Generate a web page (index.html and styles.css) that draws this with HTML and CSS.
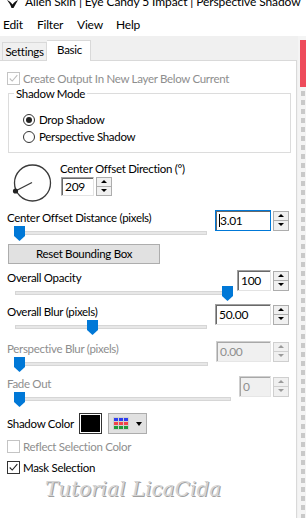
FILE: index.html
```html
<!DOCTYPE html>
<html>
<head>
<meta charset="utf-8">
<link rel="stylesheet" href="styles.css">
</head>
<body>
<div class="titlebar">
  <svg class="app-icon" width="11" height="8" viewBox="0 0 11 8"><path d="M0 0 C2 0.5 4 2.5 5.5 4.5 C7 2.5 9 0.5 11 0 C9.5 2.5 8 5.5 6.5 8 L4.5 8 C3.5 5 2 2.5 0 0 Z" fill="#111"/></svg>
  <span class="title">Allen Skin | Eye Candy 5 Impact | Perspective Shadow</span>
</div>
<div class="menubar">
  <span class="menu-item mi-edit">Edit</span>
  <span class="menu-item mi-filter">Filter</span>
  <span class="menu-item mi-view">View</span>
  <span class="menu-item">Help</span>
</div>
<div class="workspace">
  <div class="main">
    <div class="tabs">
      <div class="tab">Settings</div>
      <div class="tab tab-active">Basic</div>
    </div>
    <div class="panel">
      <div class="check disabled">
        <span class="box"><svg viewBox="0 0 13 13" width="11" height="11"><path d="M2 6.5 L5 9.5 L11 2.5" fill="none" stroke="#bdbdbd" stroke-width="1.3"/></svg></span>
        <span>Create Output In New Layer Below Current</span>
      </div>

      <fieldset class="group">
        <legend>Shadow Mode</legend>
        <div class="radio"><span class="dot dot-on"></span><span>Drop Shadow</span></div>
        <div class="radio"><span class="dot"></span><span>Perspective Shadow</span></div>
      </fieldset>

      <div class="dial-row">
        <svg class="dial" width="40" height="40" viewBox="0 0 40 40">
          <circle cx="20.5" cy="20" r="18" fill="none" stroke="#3a3a3a" stroke-width="1.3"/>
          <line x1="3.5" y1="28" x2="20" y2="19.5" stroke="#3a3a3a" stroke-width="1.4"/>
          <circle cx="3.5" cy="28" r="2.6" fill="#222"/>
        </svg>
        <div class="dial-ctrl">
          <div class="label">Center Offset Direction (°)</div>
          <div class="spin spin-dial">
            <div class="field w33">209</div>
            <div class="arrows"><span class="arr up"></span><span class="arr down"></span></div>
          </div>
        </div>
      </div>

      <div class="sblock mt7">
        <div class="sleft">
          <div class="label">Center Offset Distance (pixels)</div>
          <div class="slider"><div class="track"></div><svg class="thumb" style="left:-1px" width="11" height="15" viewBox="0 0 11 15"><polygon points="0,0 11,0 11,10 5.5,15 0,10" fill="#0078d7"/></svg></div>
        </div>
        <div class="spin">
          <div class="field w56 focused"><span class="caret"></span>3.01</div>
          <div class="arrows"><span class="arr up"></span><span class="arr down"></span></div>
        </div>
      </div>

      <div class="btn">Reset Bounding Box</div>

      <div class="sblock mt6">
        <div class="sleft">
          <div class="label">Overall Opacity</div>
          <div class="slider"><div class="track"></div><svg class="thumb" style="left:207px" width="11" height="15" viewBox="0 0 11 15"><polygon points="0,0 11,0 11,10 5.5,15 0,10" fill="#0078d7"/></svg></div>
        </div>
        <div class="spin">
          <div class="field w34">100</div>
          <div class="arrows"><span class="arr up"></span><span class="arr down"></span></div>
        </div>
      </div>

      <div class="sblock mt3">
        <div class="sleft">
          <div class="label">Overall Blur (pixels)</div>
          <div class="slider"><div class="track"></div><svg class="thumb" style="left:72px" width="11" height="15" viewBox="0 0 11 15"><polygon points="0,0 11,0 11,10 5.5,15 0,10" fill="#0078d7"/></svg></div>
        </div>
        <div class="spin">
          <div class="field w56">50.00</div>
          <div class="arrows"><span class="arr up"></span><span class="arr down"></span></div>
        </div>
      </div>

      <div class="sblock mt6 disabled">
        <div class="sleft">
          <div class="label">Perspective Blur (pixels)</div>
          <div class="slider"><div class="track"></div><svg class="thumb" style="left:-1px" width="11" height="15" viewBox="0 0 11 15"><polygon points="0,0 11,0 11,10 5.5,15 0,10" fill="#0078d7"/></svg></div>
        </div>
        <div class="spin">
          <div class="field w55 off">0.00</div>
          <div class="arrows"><span class="arr up"></span><span class="arr down"></span></div>
        </div>
      </div>

      <div class="sblock mt4 disabled">
        <div class="sleft">
          <div class="label">Fade Out</div>
          <div class="slider"><div class="track"></div><svg class="thumb" style="left:-1px" width="11" height="15" viewBox="0 0 11 15"><polygon points="0,0 11,0 11,10 5.5,15 0,10" fill="#0078d7"/></svg></div>
        </div>
        <div class="spin">
          <div class="field w32 off">0</div>
          <div class="arrows"><span class="arr up"></span><span class="arr down"></span></div>
        </div>
      </div>

      <div class="color-row">
        <span class="color-label">Shadow Color</span>
        <span class="swatch"></span>
        <span class="palette-btn">
          <span class="grid">
            <i class="b"></i><i class="b"></i><i class="b"></i>
            <i class="r"></i><i class="r"></i><i class="r"></i>
            <i class="g"></i><i class="g"></i><i class="g"></i>
          </span>
          <span class="caret-down"></span>
        </span>
      </div>

      <div class="check disabled mt5">
        <span class="box"></span>
        <span>Reflect Selection Color</span>
      </div>
      <div class="check mt6">
        <span class="box"><svg viewBox="0 0 13 13" width="11" height="11"><path d="M2 6.5 L5 9.5 L11 2.5" fill="none" stroke="#222" stroke-width="1.3"/></svg></span>
        <span>Mask Selection</span>
      </div>

      <div class="watermark">Tutorial LicaCida</div>
    </div>
  </div>
  <div class="side">
    <div class="red"></div>
    <div class="dashes"></div>
  </div>
</div>
</body>
</html>
```
FILE: styles.css
```css
* { box-sizing: border-box; }
html, body { margin: 0; padding: 0; }
body {
  width: 306px;
  height: 518px;
  overflow: hidden;
  background: #fff;
  font-family: Lato, "Liberation Sans", sans-serif;
  font-size: 11.5px;
  letter-spacing: -0.3px;
  color: #000;
}

.titlebar {
  height: 12px;
  overflow: hidden;
  display: flex;
  align-items: flex-start;
  white-space: nowrap;
}
.app-icon { margin: 0 0 0 7px; flex: none; }
.title {
  margin: -6px 0 0 7px;
  line-height: 16px;
  font-size: 12px;
  letter-spacing: -0.1px;
}

.menubar {
  height: 24px;
  display: flex;
  align-items: center;
  padding-left: 3px;
  font-size: 12px;
  letter-spacing: -0.2px;
}
.menu-item { display: block; }
.mi-edit { width: 34px; }
.mi-filter { width: 40px; }
.mi-view { width: 39px; }

.workspace { display: flex; height: 482px; }
.main { width: 298px; background: #f0f0f0; display: flex; flex-direction: column; }

.tabs {
  height: 24px;
  display: flex;
  align-items: flex-end;
  padding-left: 2px;
  position: relative;
  z-index: 1;
}
.tab {
  width: 45px;
  height: 18px;
  border: 1px solid #d9d9d9;
  border-bottom: none;
  background: #f0f0f0;
  text-align: center;
  line-height: 17px;
}
.tab-active {
  width: 44px;
  height: 21px;
  margin-bottom: -1px;
  background: #fff;
  border-left: none;
  line-height: 18px;
  padding-left: 2px;
}

.panel {
  width: 297px;
  flex: 1;
  background: #fff;
  border-top: 1px solid #d9d9d9;
  border-right: 1px solid #d9d9d9;
  overflow: hidden;
}

.label { line-height: 15px; white-space: nowrap; }
.disabled, .disabled .label { color: #8e8e8e; }

.check {
  display: flex;
  align-items: center;
  height: 15px;
  margin: 10px 0 0 7px;
  gap: 3px;
  line-height: 15px;
}
.box {
  width: 13px;
  height: 13px;
  border: 1px solid #333;
  background: #fff;
  display: flex;
  align-items: center;
  justify-content: center;
  flex: none;
}
.check.disabled .box { border-color: #c4c4c4; }
.mt5 { margin-top: 5px; }
.mt6 { margin-top: 6px; }
.mt3 { margin-top: 3px; }
.mt4 { margin-top: 4px; }
.mt7 { margin-top: 7px; }

.group {
  margin: 0 5px 0 8px;
  padding: 10px 0 7px 14px;
  border: 1px solid #dcdcdc;
  min-width: 0;
}
.group legend {
  margin-left: -9px;
  padding: 0 2px;
  line-height: 15px;
}
.radio {
  display: flex;
  align-items: center;
  height: 17px;
  gap: 4px;
}
.dot {
  width: 12px;
  height: 12px;
  border: 1px solid #333;
  border-radius: 50%;
  display: flex;
  align-items: center;
  justify-content: center;
  flex: none;
}
.dot-on::after {
  content: "";
  width: 6px;
  height: 6px;
  border-radius: 50%;
  background: #222;
}

.dial-row {
  display: flex;
  align-items: flex-start;
  margin-top: 8px;
  padding-left: 12px;
}
.dial { margin-top: 2px; flex: none; }
.dial-ctrl { margin-left: 8px; }
.spin-dial { margin: 1px 0 0 1px; }
.spin-dial .field { height: 19px; line-height: 17px; }
.spin-dial .arrows { margin-top: 0; height: 19px; }
.spin-dial .arr { height: 9.5px; }

.sblock {
  display: flex;
  align-items: flex-start;
  padding: 0 7px;
  gap: 8px;
}
.sleft { flex: 1; min-width: 0; }
.slider {
  position: relative;
  height: 16px;
  margin-left: 8px;
}
.track {
  position: absolute;
  left: 0;
  right: 0;
  top: 6px;
  height: 4px;
  background: #e7e7e7;
  border: 1px solid #d6d6d6;
}
.thumb { position: absolute; top: 1px; }

.spin { display: flex; gap: 2px; align-items: flex-start; flex: none; }
.field {
  height: 21px;
  border: 1px solid;
  border-color: #a0a0a0 #e3e3e3 #e3e3e3 #a0a0a0;
  box-shadow: inset 1px 1px 0 #696969;
  background: #fff;
  padding-left: 3px;
  line-height: 19px;
  color: #000;
  font-size: 12px;
  position: relative;
}
.w32 { width: 32px; }
.w33 { width: 33px; }
.w34 { width: 34px; }
.w55 { width: 55px; }
.w56 { width: 56px; }
.focused {
  border-color: #0078d7;
}
.caret {
  display: inline-block;
  width: 1px;
  height: 13px;
  background: #000;
  vertical-align: -2px;
}
.off {
  background: #f0f0f0;
  color: #8e8e8e;
  border-color: #cfcfcf #e6e6e6 #e6e6e6 #cfcfcf;
  box-shadow: inset 1px 1px 0 #a8a8a8;
}
.arrows {
  width: 16px;
  height: 20px;
  margin-top: 1px;
  display: flex;
  flex-direction: column;
}
.arr {
  height: 10px;
  border: 1px solid #adadad;
  background: #f0f0f0;
  position: relative;
}
.arr.down { border-top: none; }
.arr::after {
  content: "";
  position: absolute;
  left: 4px;
  top: 2px;
  border-left: 3px solid transparent;
  border-right: 3px solid transparent;
}
.arr.up::after { border-bottom: 3px solid #000; }
.arr.down::after { border-top: 3px solid #000; top: 2px; }
.disabled .arr { border-color: #cfcfcf; }
.disabled .arr.up::after { border-bottom-color: #9a9a9a; }
.disabled .arr.down::after { border-top-color: #9a9a9a; }

.btn {
  width: 152px;
  height: 20px;
  margin: 3px 0 0 8px;
  background: #e1e1e1;
  border: 1px solid #adadad;
  text-align: center;
  line-height: 18px;
}

.color-row {
  display: flex;
  align-items: center;
  margin-top: 6px;
  padding-left: 7px;
  height: 21px;
}
.color-label { width: 72px; flex: none; white-space: nowrap; }
.swatch {
  width: 23px;
  height: 21px;
  background: #000;
  border: 1px solid #333;
  box-shadow: inset 0 0 0 1px #fff;
}
.palette-btn {
  width: 39px;
  height: 21px;
  margin-left: 6px;
  background: #e1e1e1;
  border: 1px solid #adadad;
  display: flex;
  align-items: center;
  padding-left: 4px;
  gap: 7px;
}
.grid {
  display: grid;
  grid-template-columns: repeat(3, 4px);
  grid-template-rows: repeat(3, 3px);
  gap: 1px;
  background: #d0d0d0;
  padding: 1px;
}
.grid i { display: block; }
.grid .b { background: #2d3df0; }
.grid .r { background: #f0444a; }
.grid .g { background: #1f9b3a; }
.caret-down {
  border-left: 3.5px solid transparent;
  border-right: 3.5px solid transparent;
  border-top: 4px solid #000;
}

.watermark {
  margin: 3px 0 0 45px;
  font-family: "DejaVu Serif", serif;
  font-style: italic;
  font-size: 20px;
  line-height: 23px;
  color: #d4d4d4;
  text-shadow: 1px 1px 0 #a0a0a0;
  letter-spacing: 0;
  white-space: nowrap;
}

.side {
  width: 8px;
  background: #f4f4f4;
  padding: 4px 0 0 2px;
  display: flex;
  flex-direction: column;
}
.red { height: 47px; background: #ee4b5b; }
.dashes {
  flex: 1;
  margin: 0 1px 0 1px;
  background: repeating-linear-gradient(to bottom, #f4f4f4 0, #f4f4f4 4px, #c9c9c9 4px, #c9c9c9 9px);
}
```
